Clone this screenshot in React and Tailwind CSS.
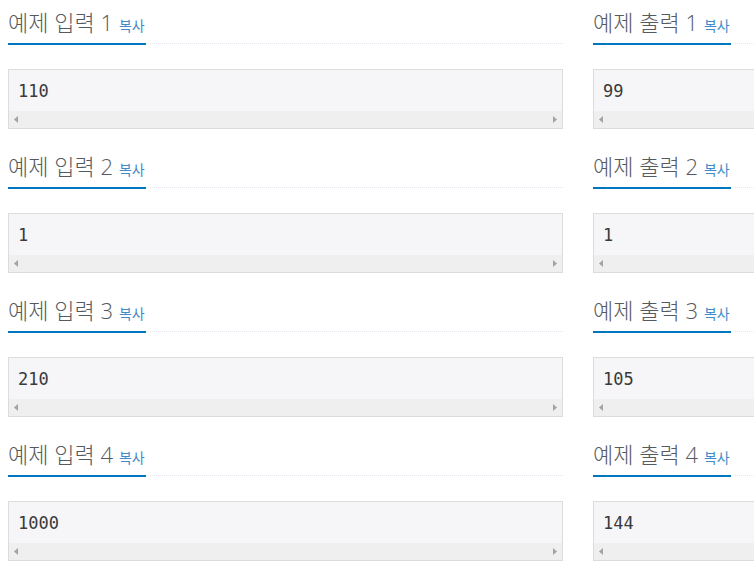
import React from "react";

const rows = [
  { n: 1, input: "110", output: "99" },
  { n: 2, input: "1", output: "1" },
  { n: 3, input: "210", output: "105" },
  { n: 4, input: "1000", output: "144" },
];

function Arrow({ dir }) {
  return (
    <svg width="4" height="7" viewBox="0 0 4 7" className="block">
      {dir === "left" ? (
        <polygon points="4,0 4,7 0,3.5" fill="#a3a3a3" />
      ) : (
        <polygon points="0,0 0,7 4,3.5" fill="#a3a3a3" />
      )}
    </svg>
  );
}

function Sample({ title, value }) {
  return (
    <div className="w-[555px] shrink-0">
      <div className="h-[44px] border-b border-dotted border-[#e4e9f0]">
        <h2 className="inline-block h-[45px] border-b-2 border-[#0076c0] pt-[9px] pr-[1px] text-[22px] leading-[26px] font-light text-[#555a60] whitespace-nowrap font-['Open_Sans','Noto_Sans_CJK_KR',sans-serif]">
          <span>{title}</span>
          <span className="ml-[6px] text-[14px] font-normal text-[#428bca]">복사</span>
        </h2>
      </div>
      <div className="mt-[25px] h-[60px] border border-[#dcdcdf] bg-[#f6f6f8] flex flex-col">
        <div className="flex-1 pl-[9px] pt-[11px] font-['DejaVu_Sans_Mono',monospace] text-[17px] leading-[20px] text-[#3a3a3a]">
          {value}
        </div>
        <div className="h-[17px] bg-[#efefef] flex items-center justify-between px-[5px]">
          <Arrow dir="left" />
          <Arrow dir="right" />
        </div>
      </div>
    </div>
  );
}

export default function App() {
  return (
    <div className="w-[754px] h-[578px] overflow-hidden bg-white">
      <div className="pl-[8px] flex flex-col">
        {rows.map((r) => (
          <div key={r.n} className="flex gap-[30px] h-[144px]">
            <Sample title={`예제 입력 ${r.n}`} value={r.input} />
            <Sample title={`예제 출력 ${r.n}`} value={r.output} />
          </div>
        ))}
      </div>
    </div>
  );
}
